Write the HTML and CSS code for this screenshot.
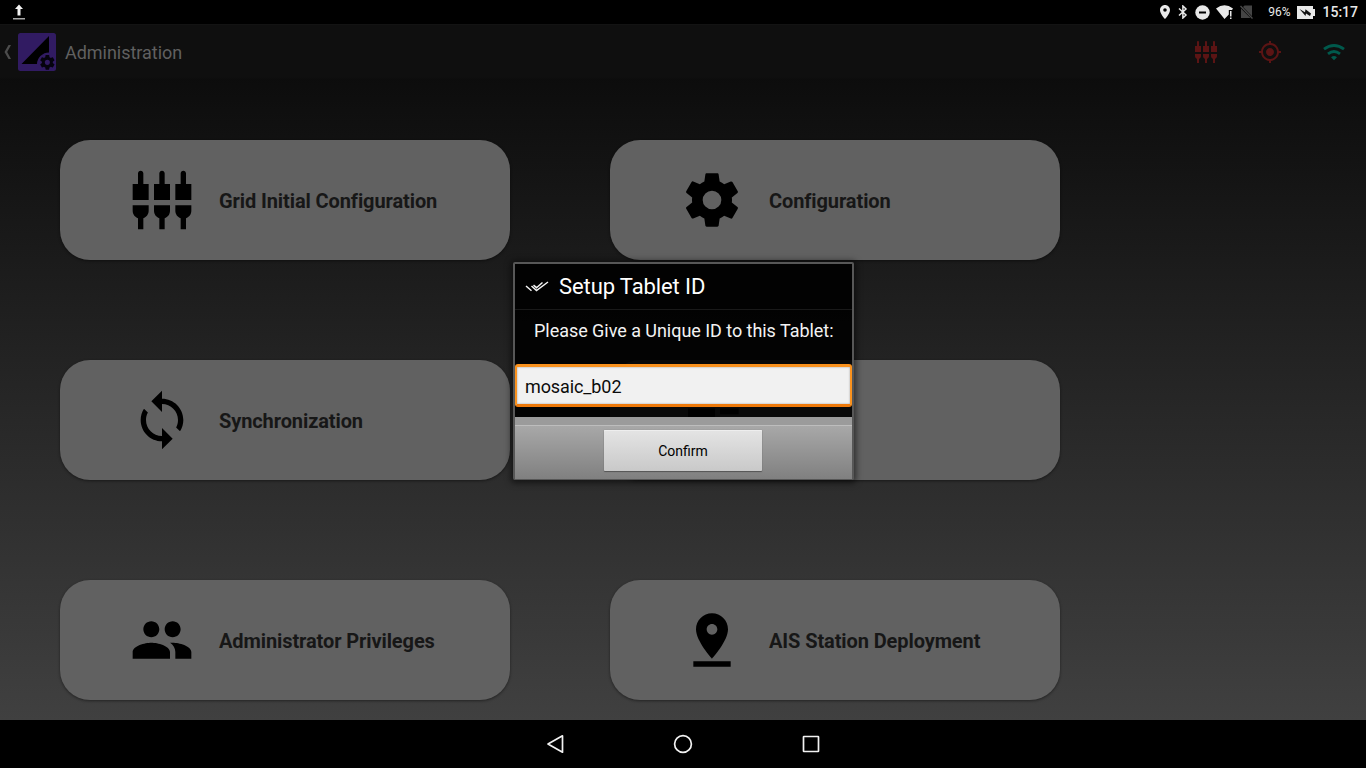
FILE: index.html
```html
<!DOCTYPE html>
<html lang="en">
<head>
<meta charset="utf-8">
<title>Administration</title>
<link rel="stylesheet" href="styles.css">
</head>
<body>
<div class="screen">
  <header class="status-bar">
    <svg class="upload" width="12" height="16" viewBox="0 0 12 16"><path d="M6 .5l4 4.500H7.500v6.500h-3V5H2z" fill="#f2f2f2"/><path d="M0 14h12v1.500H0z" fill="#aaa"/></svg>
    <div class="status-right">
      <svg class="s-pin" width="10" height="14" viewBox="5 2 14 20" preserveAspectRatio="none"><path fill="#e8e8e8" d="M12 2C8.130 2 5 5.130 5 9c0 5.250 7 13 7 13s7-7.750 7-13c0-3.870-3.130-7-7-7zm0 9.500a2.500 2.500 0 0 1 0-5 2.500 2.500 0 0 1 0 5z"/></svg>
      <svg class="s-bt" width="10" height="14" viewBox="0 0 10 14"><path d="M1 3.500l7 6.500-3.100 3V1L8 4 1 10.500" fill="none" stroke="#e8e8e8" stroke-width="1.500"/></svg>
      <svg class="s-dnd" width="15" height="15" viewBox="0 0 15 15"><circle cx="7.500" cy="7.500" r="7.200" fill="#e8e8e8"/><path d="M4 6.500h7v2H4z" fill="#000"/></svg>
      <svg class="s-wifi" width="18" height="15" viewBox="0 0 18 15"><path d="M0 3.500Q8.500-3 17 3.500L16 5H12.800v4.500L8.500 14z" fill="#e8e8e8"/><path d="M14 6h1.500v5.500H14zM14 12.500h1.500V14H14z" fill="#e8e8e8"/></svg>
      <svg class="s-sim" width="13" height="14" viewBox="0 0 13 14"><path d="M4.500.500H12v10.700L3 2zM1 3.500L10.500 13H1z" fill="#444"/><path d="M.5 1l12 12.500" stroke="#4b4b4b" stroke-width="1.300"/></svg>
      <span class="percent">96%</span>
      <svg class="s-bat" width="18" height="13" viewBox="0 0 18 13"><path d="M0 0h16v3h2v7h-2v3H0z" fill="#e8e8e8"/><path d="M2.500 3L8 6.200l.5-3L14 7.500 13 10 9 7.500 8.500 10z" fill="#111"/></svg>
      <span class="clock">15:17</span>
    </div>
  </header>

  <div class="action-bar">
    <svg class="back" width="8" height="14" viewBox="0 0 8 14"><path d="M8 0H5.500L1.500 7l4 7H8L4.200 7z" fill="#4c4c4c"/></svg>
    <svg class="logo" width="38" height="38" viewBox="0 0 38 38"><rect width="38" height="38" rx="2.500" fill="#311b62"/><path d="M31 3v16.500A12 12 0 0 0 19 31H3.500z" fill="#000"/><g transform="translate(20.600 20.600) scale(.73)"><path fill="#05030d" d="M19.430 12.980c.04-.32.070-.64.070-.98s-.03-.66-.07-.98l2.110-1.650c.19-.15.240-.42.120-.64l-2-3.460c-.12-.22-.39-.3-.61-.22l-2.490 1c-.52-.4-1.080-.73-1.690-.98l-.38-2.650C14.460 2.180 14.250 2 14 2h-4c-.25 0-.46.180-.49.420l-.38 2.650c-.61.250-1.170.590-1.690.980l-2.490-1c-.23-.09-.49 0-.61.220l-2 3.460c-.13.220-.07.490.120.640l2.110 1.650c-.04.320-.07.650-.07.980s.03.660.070.980l-2.110 1.650c-.19.150-.24.420-.12.640l2 3.460c.12.220.390.300.610.220l2.490-1c.52.400 1.080.730 1.690.980l.38 2.650c.03.240.240.420.490.420h4c.25 0 .46-.18.490-.42l.38-2.650c.61-.25 1.170-.59 1.690-.98l2.490 1c.23.090.490 0 .61-.22l2-3.460c.12-.22.070-.49-.12-.64zM12 15.500a3.500 3.500 0 1 1 0-7 3.500 3.500 0 0 1 0 7z"/></g></svg>
    <h1 class="page-title">Administration</h1>
    <div class="actions">
      <svg class="red" viewBox="0 0 24 24"><use href="#plugs"/></svg>
      <svg class="red" viewBox="0 0 24 24"><path d="M12 8c-2.210 0-4 1.790-4 4s1.790 4 4 4 4-1.790 4-4-1.790-4-4-4zm8.940 3c-.46-4.170-3.770-7.480-7.940-7.940V1h-2v2.060C6.830 3.520 3.520 6.830 3.060 11H1v2h2.060c.46 4.170 3.770 7.480 7.940 7.940V23h2v-2.060c4.170-.46 7.480-3.770 7.940-7.940H23v-2h-2.060zM12 19c-3.870 0-7-3.130-7-7s3.130-7 7-7 7 3.130 7 7-3.130 7-7 7z"/></svg>
      <svg class="wifi" viewBox="0 0 24 24"><path d="M2 9.200Q12 1.700 22 9.200M6 13.800Q12 9.300 18 13.800" fill="none" stroke="#00594c" stroke-width="2.900"/><path d="M9 17.300q3-2.600 6 0L12 20.300z"/></svg>
    </div>
  </div>

  <main class="content">
    <div class="card">
      <svg class="icon" viewBox="0 0 24 24"><path id="plugs" d="M5 2c0-.55-.45-1-1-1s-1 .45-1 1v4H1v6h6V6H5V2zm4 14c0 1.300.840 2.400 2 2.820V23h2v-4.180c1.160-.41 2-1.510 2-2.820v-2H9v2zm-8 0c0 1.300.840 2.400 2 2.820V23h2v-4.180C6.160 18.400 7 17.300 7 16v-2H1v2zM21 6V2c0-.55-.45-1-1-1s-1 .45-1 1v4h-2v6h6V6h-2zm-8-4c0-.55-.45-1-1-1s-1 .45-1 1v4H9v6h6V6h-2V2zm4 14c0 1.300.840 2.400 2 2.820V23h2v-4.180c1.160-.41 2-1.510 2-2.820v-2h-6v2z"/></svg>
      <span class="label">Grid Initial Configuration</span>
    </div>
    <div class="card">
      <svg class="icon" viewBox="0 0 24 24"><path d="M19.430 12.980c.04-.32.070-.64.070-.98s-.03-.66-.07-.98l2.110-1.650c.19-.15.240-.42.120-.64l-2-3.460c-.12-.22-.39-.3-.61-.22l-2.490 1c-.52-.4-1.080-.73-1.690-.98l-.38-2.650C14.460 2.180 14.250 2 14 2h-4c-.25 0-.46.180-.49.420l-.38 2.650c-.61.250-1.170.590-1.690.980l-2.490-1c-.23-.09-.49 0-.61.220l-2 3.460c-.13.220-.07.490.120.640l2.110 1.650c-.04.320-.07.650-.07.980s.03.660.070.980l-2.110 1.650c-.19.150-.24.420-.12.640l2 3.460c.12.220.390.300.610.220l2.490-1c.52.400 1.080.730 1.690.980l.38 2.650c.03.240.240.420.490.420h4c.25 0 .46-.18.490-.42l.38-2.650c.61-.25 1.170-.59 1.690-.98l2.490 1c.23.090.490 0 .61-.22l2-3.460c.12-.22.070-.49-.12-.64zM12 15.500a3.500 3.500 0 1 1 0-7 3.500 3.500 0 0 1 0 7z"/></svg>
      <span class="label">Configuration</span>
    </div>
    <div class="card">
      <svg class="icon" viewBox="0 0 24 24"><path d="M12 4V1L8 5l4 4V6c3.310 0 6 2.690 6 6 0 1.010-.25 1.970-.7 2.800l1.460 1.460C19.540 15.030 20 13.570 20 12c0-4.420-3.580-8-8-8zm0 14c-3.310 0-6-2.690-6-6 0-1.010.250-1.970.700-2.800L5.240 7.740C4.460 8.970 4 10.430 4 12c0 4.420 3.580 8 8 8v3l4-4-4-4v3z"/></svg>
      <span class="label">Synchronization</span>
    </div>
    <div class="card">
      <svg class="icon" viewBox="0 0 24 24"><path d="M3 7.700h10.100V13H3zM15 7.700h7v2.100h-7z"/></svg>
    </div>
    <div class="card">
      <svg class="icon" viewBox="0 0 24 24"><path d="M16 11c1.660 0 2.990-1.340 2.990-3S17.660 5 16 5c-1.660 0-3 1.340-3 3s1.340 3 3 3zm-8 0c1.660 0 2.990-1.340 2.990-3S9.660 5 8 5C6.340 5 5 6.340 5 8s1.340 3 3 3zm0 2c-2.330 0-7 1.170-7 3.500V19h14v-2.500c0-2.330-4.670-3.500-7-3.500zm8 0c-.29 0-.62.020-.97.050 1.160.840 1.970 1.970 1.970 3.450V19h6v-2.500c0-2.330-4.670-3.500-7-3.500z"/></svg>
      <span class="label">Administrator Privileges</span>
    </div>
    <div class="card">
      <svg class="icon" viewBox="0 0 24 24"><path d="M18 8c0-3.310-2.690-6-6-6S6 4.690 6 8c0 4.500 6 11 6 11s6-6.500 6-11zm-8 0c0-1.100.900-2 2-2s2 .9 2 2-.89 2-2 2c-1.100 0-2-.9-2-2zM5 20v2h14v-2H5z"/></svg>
      <span class="label">AIS Station Deployment</span>
    </div>
  </main>

  <nav class="nav-bar">
    <svg width="20" height="20" viewBox="0 0 20 20"><path d="M17.500 1.800v16.400L3 10z"/></svg>
    <svg width="20" height="20" viewBox="0 0 20 20"><circle cx="10" cy="10" r="8.400"/></svg>
    <svg width="20" height="20" viewBox="0 0 20 20"><rect x="2.500" y="2.500" width="15" height="15" rx=".5"/></svg>
  </nav>
</div>

<section class="dialog">
  <div class="dialog-head">
    <svg width="24" height="16" viewBox="0 0 24 16"><path d="M1 7l5.500 4.700M6.500 7l5 4.500L23 3M8.500 6.200l3 2.500L17.500 3.500" fill="none" stroke="#f4f4f4" stroke-width="1.500"/></svg>
    <h2 class="dialog-title">Setup Tablet ID</h2>
  </div>
  <p class="message">Please Give a Unique ID to this Tablet:</p>
  <div class="field">mosaic_b02</div>
  <div class="buttons"><button class="confirm">Confirm</button></div>
</section>
</body>
</html>
```
FILE: styles.css
```css
* { box-sizing: border-box; }
body { margin: 0; width: 1366px; height: 768px; overflow: hidden; background: #000; font-family: Roboto, "Liberation Sans", sans-serif; }
svg { display: block; flex: none; }
.screen { display: flex; flex-direction: column; height: 768px; background: linear-gradient(#080808 24px, #404040 720px); }
.status-bar { height: 24px; flex: none; display: flex; align-items: center; background: #000; color: #e8e8e8; padding: 0 8px 0 13px; }
.status-right { display: flex; align-items: center; margin-left: auto; }
.s-bt { margin-left: 8px; }
.s-dnd { margin-left: 7px; }
.s-wifi { margin-left: 6px; }
.s-sim { margin-left: 6px; }
.percent { font-size: 12px; margin-left: 15px; }
.s-bat { margin-left: 7px; }
.clock { font-size: 14px; font-weight: 500; margin-left: 7px; }
.action-bar { height: 56px; flex: none; display: flex; align-items: center; padding: 0 20px 1px 3px; background: linear-gradient(#0f0f0f 52px, #0c0c0c); border-top: 1px solid #131313; }
.logo { margin-left: 7px; }
.page-title { margin: 1px 0 0 9px; font-size: 18px; font-weight: 400; line-height: 24px; color: #606060; letter-spacing: -.03px; }
.actions { display: flex; gap: 40px; margin-left: auto; }
.actions svg { width: 24px; height: 24px; }
.red { fill: #5b1414; }
.wifi { fill: #00594c; }
.content { height: 640px; flex: none; display: grid; grid-template-columns: 450px 450px; grid-auto-rows: 120px; gap: 100px; padding: 60px 60px 20px; align-content: start; }
.card { display: flex; align-items: center; padding-left: 70px; border-radius: 30px; background: #616161; box-shadow: 0 1px 3px rgba(0,0,0,.45); }
.icon { width: 64px; height: 64px; }
.label { margin-left: 25px; padding-top: 2px; font-size: 20px; font-weight: 700; color: #171717; white-space: nowrap; letter-spacing: -.1px; }
.nav-bar { height: 48px; flex: none; display: flex; align-items: center; justify-content: center; gap: 108px; background: #000; }
.nav-bar svg { fill: none; stroke: #f2f2f2; stroke-width: 1.7; stroke-linejoin: round; }
.dialog { position: absolute; left: 513px; top: 262px; width: 341px; height: 218px; display: flex; flex-direction: column; border: 2px solid #575757; border-bottom-width: 1px; border-radius: 2px; background: rgba(0,0,0,.91); background-clip: padding-box; box-shadow: 0 1px 6px 2px rgba(0,0,0,.55); color: #fff; }
.dialog-head { height: 46px; flex: none; display: flex; align-items: center; padding-left: 10px; border-bottom: 1px solid #191919; }
.dialog-title { margin: 0 0 0 10px; font-size: 22px; font-weight: 400; letter-spacing: -.1px; }
.message { margin: 0; height: 54px; flex: none; padding: 9px 0 0 19px; font-size: 18px; line-height: 24px; white-space: nowrap; color: #f3f3f3; letter-spacing: -.04px; }
.field { height: 43px; flex: none; display: flex; align-items: center; padding: 1px 0 0 8px; border: 3px solid #fa921e; border-width: 3px 2px 3px 2px; border-bottom-color: #ee790a; border-radius: 3px; background: #f1f1f1; box-shadow: inset 0 0 2px #999; color: #0c0c0c; font-size: 18px; letter-spacing: -.1px; }
.buttons { margin-top: 10px; flex: 1; display: flex; justify-content: center; align-items: flex-start; padding-top: 13px; background: linear-gradient(#9b9b9b 0 8px, #bdbdbd 8px 9px, #a8a8a8 9px, #808080 100%); }
.confirm { width: 158px; height: 41px; margin-right: 1px; padding: 0; border: 0; border-radius: 1px; background: linear-gradient(#e4e4e4, #c9c9c9); box-shadow: 0 1px 1px #555, 0 0 1px #777, inset 0 1px #eee; font: 14px Roboto, sans-serif; color: #000; }
```
